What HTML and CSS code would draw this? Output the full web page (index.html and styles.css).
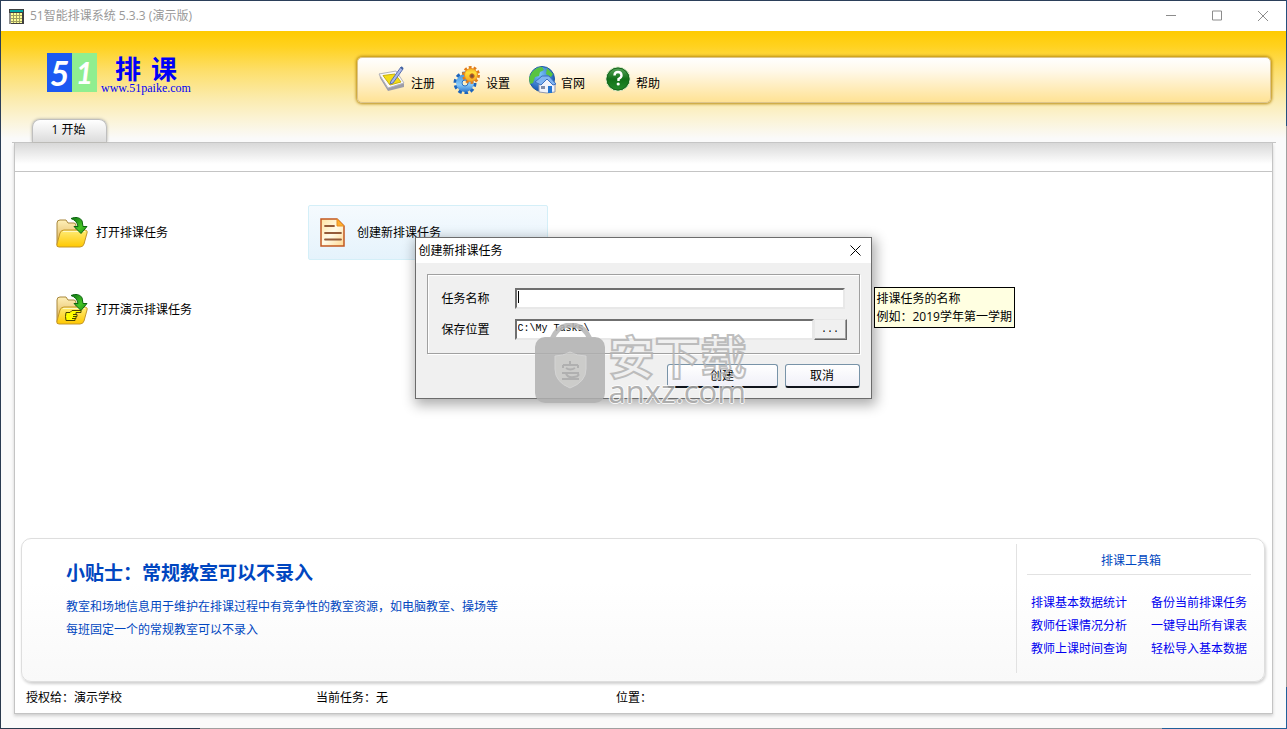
FILE: index.html
```html
<!DOCTYPE html>
<html lang="zh-CN">
<head>
<meta charset="utf-8">
<meta name="viewport" content="width=device-width, initial-scale=1">
<title>51智能排课系统</title>
<link rel="stylesheet" href="styles.css">
</head>
<body>
<svg class="defs" aria-hidden="true">
  <defs>
    <linearGradient id="folder-back" x1="0" y1="0" x2="0" y2="1"><stop offset="0" stop-color="#fff0b8"/><stop offset="1" stop-color="#dcae50"/></linearGradient>
    <linearGradient id="folder-front" x1="0" y1="0" x2="0" y2="1"><stop offset="0" stop-color="#ffec78"/><stop offset="1" stop-color="#ffc800"/></linearGradient>
    <linearGradient id="arrow" x1="0" y1="0" x2="1" y2="1"><stop offset="0" stop-color="#0a7012"/><stop offset=".6" stop-color="#45c425"/><stop offset="1" stop-color="#1a8a12"/></linearGradient>
    <linearGradient id="paper" x1="0" y1="0" x2="1" y2="1"><stop offset="0" stop-color="#ffe3a0"/><stop offset=".5" stop-color="#fffbe8"/><stop offset="1" stop-color="#ffd890"/></linearGradient>
    <linearGradient id="gear-blue" gradientUnits="userSpaceOnUse" x1="0" y1="5" x2="0" y2="28"><stop offset="0" stop-color="#2f86dc"/><stop offset=".6" stop-color="#86c8f8"/><stop offset="1" stop-color="#1460c0"/></linearGradient>
    <linearGradient id="gear-gold" gradientUnits="userSpaceOnUse" x1="0" y1="0" x2="0" y2="19"><stop offset="0" stop-color="#f0941c"/><stop offset=".35" stop-color="#ffe03a"/><stop offset="1" stop-color="#f08c18"/></linearGradient>
    <radialGradient id="globe" cx=".4" cy=".3" r=".7"><stop offset="0" stop-color="#7cc8fa"/><stop offset="1" stop-color="#1250b0"/></radialGradient>
    <linearGradient id="help" x1="0" y1="0" x2="0" y2="1"><stop offset="0" stop-color="#5faa62"/><stop offset=".5" stop-color="#107018"/><stop offset="1" stop-color="#248c2c"/></linearGradient>
    <g id="folder">
      <path d="M2 29V7q0-3 3-3h6l2 3h6q2 0 2 3v8z" fill="url(#folder-back)" stroke="#a8873c"/>
      <path d="M9 14h20q4 0 3 3l-3 11q-1 3-4 3H4q-3 0-2-3l3-11q1-3 4-3z" fill="url(#folder-front)" stroke="#c4962a"/>
      <path d="M8 15.500h22" stroke="#fff8c0"/>
      <path d="M16 2.500q7-3 11 2l1 6h4l-6 7-7-7h4q-1-6-7-8z" fill="url(#arrow)" stroke="#0d6710"/>
    </g>
  </defs>
</svg>
<div class="window">
  <header class="titlebar">
    <svg class="app-icon" viewBox="0 0 15 15" aria-hidden="true"><path d="M0 0h15v15H0z" fill="#404040"/><path d="M0 4h2v11H0z" fill="#909090"/><path d="M1 1h13v2H1z" fill="#00a8a8"/><path d="M2 4h11v10H2z" fill="#ffff98"/><path d="M2 6.500h11M2 9.500h11M2 12.500h11M4.500 4v10M7.500 4v10M10.500 4v10" stroke="#a0a060"/></svg>
    <h1 class="app-title">51智能排课系统 5.3.3 (演示版)</h1>
    <div class="window-controls">
      <button class="control" type="button" aria-label="最小化"><svg viewBox="0 0 10 10"><path d="M0 4.500h10"/></svg></button>
      <button class="control" type="button" aria-label="最大化"><svg viewBox="0 0 10 10"><path d="M.5 0h9v9h-9z"/></svg></button>
      <button class="control" type="button" aria-label="关闭"><svg viewBox="0 0 10 10"><path d="M0 0l10 10M10 0L0 10"/></svg></button>
    </div>
  </header>
  <div class="banner">
    <div class="brand-row">
      <div class="logo">
        <span class="logo-five">5</span><span class="logo-one">1</span>
        <div class="logo-words"><div class="logo-name"><span>排</span><span>课</span></div><span class="logo-site">www.51paike.com</span></div>
      </div>
      <nav class="toolbar">
        <button class="tool" type="button">
          <svg viewBox="0 0 28 28" aria-hidden="true"><path d="M1 7l9 14 16-4v4l-16 4L2 12z" fill="#9c9ca8"/><path d="M1 8l17-3 8 12-16 5z" fill="#fafafc" stroke="#b4b4bc"/><path d="M5 9.500L17 8l6 8-11 3z" fill="#f4dc18" stroke="#c8b010"/><path d="M13 15l-1 3 3-1L25 3l-2-2z" fill="#a8b8ea" stroke="#5a6eb0"/><path d="M23 1l2 2" stroke="#4060a0" stroke-width="2"/></svg>
          <span>注册</span></button>
        <button class="tool" type="button">
          <svg viewBox="0 0 28 28" aria-hidden="true"><circle cx="12" cy="17" r="9.500" fill="none" stroke="#1c64bc" stroke-width="4" stroke-dasharray="3.400 2.570"/><circle cx="12" cy="17" r="6" fill="none" stroke="url(#gear-blue)" stroke-width="6"/><circle cx="12" cy="17" r="3" fill="#ffefc4" stroke="#2472c8"/><circle cx="18" cy="9" r="7.500" fill="none" stroke="#e07c1c" stroke-width="3" stroke-dasharray="2.700 2.012"/><circle cx="18" cy="9" r="6.500" fill="url(#gear-gold)" stroke="#ec9020"/><circle cx="19" cy="10" r="2.200" fill="#7b5038" stroke="#d06818"/></svg>
          <span>设置</span></button>
        <button class="tool" type="button">
          <svg viewBox="0 0 28 28" aria-hidden="true"><circle cx="14" cy="13" r="12.500" fill="url(#globe)" stroke="#1c58a0"/><path d="M4 6q5-5 10-5l2 3-4 2-1 4-4 1-2 6-3 1-1-6zM19 2l6 6-2 3-5-3z" fill="#58c440"/><path d="M11 26V18l6-6 10 6v8l-8 1z" fill="#f2f4fa" stroke="#9098b0"/><path d="M7 16l7-6h7l7 8-3 1-6-6-6 6z" fill="#80b4f0" stroke="#3c70c0"/><path d="M20 20h4v7h-4z" fill="#2475d0"/><path d="M13 20h4v3h-4z" fill="#808ca8"/></svg>
          <span>官网</span></button>
        <button class="tool" type="button">
          <svg viewBox="0 0 28 28" aria-hidden="true"><circle cx="15" cy="13" r="12" fill="url(#help)" stroke="#d8e8c8"/><circle cx="15" cy="13" r="11" fill="none" stroke="#17651c"/><path d="M11.500 9.500Q11.500 6 15 6t3.500 3.500q0 2-3 3.500V15" fill="none" stroke="#fff" stroke-width="2.400"/><circle cx="15.200" cy="18" r="1.600" fill="#fff"/></svg>
          <span>帮助</span></button>
      </nav>
    </div>
    <div class="tabs"><button class="tab" type="button">1 开始</button></div>
  </div>
  <main class="page">
    <div class="ribbon"></div>
    <section class="tasks">
      <button class="task" type="button"><svg viewBox="0 0 33 33" aria-hidden="true"><use href="#folder"/></svg><span>打开排课任务</span></button>
      <button class="task task-active" type="button"><svg viewBox="0 0 33 33" aria-hidden="true"><path d="M5 3h16l7 7v20H5z" fill="url(#paper)" stroke="#c25820" stroke-width="1.500"/><path d="M21 3l7 7h-7z" fill="#ffb030" stroke="#e89020"/><path d="M9 10h9M9 17h16M9 23.500h16" stroke="#935b38" stroke-width="1.800" stroke-linecap="round"/></svg><span>创建新排课任务</span></button>
      <button class="task" type="button"><svg viewBox="0 0 33 33" aria-hidden="true"><use href="#folder"/><path d="M11 19.500h4l2-2h9v2h-5v2h1v2h-1v2h-1v2h-9q-1-4 0-8z" fill="#ffff00" stroke="#4a4400"/><path d="M18 21.500h3M18 23.500h3M17 25.500h3" stroke="#4a4400"/></svg><span>打开演示排课任务</span></button>
    </section>
    <section class="info-card">
      <article class="tip">
        <h2 class="tip-title">小贴士：常规教室可以不录入</h2>
        <p class="tip-text">教室和场地信息用于维护在排课过程中有竞争性的教室资源，如电脑教室、操场等<br>每班固定一个的常规教室可以不录入</p>
      </article>
      <aside class="toolbox">
        <h2 class="toolbox-title">排课工具箱</h2>
        <div class="toolbox-links">
          <a href="#">排课基本数据统计</a><a href="#">备份当前排课任务</a>
          <a href="#">教师任课情况分析</a><a href="#">一键导出所有课表</a>
          <a href="#">教师上课时间查询</a><a href="#">轻松导入基本数据</a>
        </div>
      </aside>
    </section>
    <footer class="status"><span>授权给：演示学校</span><span>当前任务：无</span><span>位置：</span></footer>
  </main>
</div>
<form class="dialog" role="dialog" aria-labelledby="dialog-title">
  <div class="dialog-bar">
    <h2 class="dialog-title" id="dialog-title">创建新排课任务</h2>
    <button class="dialog-close" type="button" aria-label="关闭"><svg viewBox="0 0 11 11"><path d="M.5.5l10 10M10.500.5l-10 10"/></svg></button>
  </div>
  <div class="fields">
    <label for="task-name">任务名称</label>
    <div class="name-row"><input class="field field-current" id="task-name" type="text"></div>
    <label for="task-path">保存位置</label>
    <div class="path-row"><input class="field" id="task-path" type="text" value="C:\My Tasks\"><button class="browse" type="button">...</button></div>
  </div>
  <div class="actions">
    <button class="action action-main" type="button">创建</button>
    <button class="action" type="button">取消</button>
  </div>
  <div class="tooltip" role="tooltip">排课任务的名称<br>例如：2019学年第一学期</div>
  <div class="watermark">
    <svg class="mark" viewBox="0 0 70 82" aria-hidden="true"><path d="M17 16q6-14 19-14t19 14" fill="none" stroke="#b5b5b5" stroke-width="5"/><rect y="14" width="70" height="66" rx="10" fill="#b1b1b1"/><path d="M20 33q8 0 15-4 7 4 16 4v13q0 13-16 19-15-6-15-19z" fill="#c6c6c4" stroke="#d0d0d0"/><path d="M35 38v3M28 42h15M28 42v3M43 42v3M31 45q4 3 9 0M27 50h17M31 50q1 5 8 4t3-4M27 56h17" fill="none" stroke="#a5a5a5" stroke-width="2"/></svg>
    <div class="mark-words"><span class="mark-name">安下载</span><span class="mark-site">anxz.com</span></div>
  </div>
</form>
</body>
</html>
```
FILE: styles.css
```css
* { box-sizing: border-box; }
html, body { margin: 0; height: 100%; }
body {
  font-family: "Open Sans", "Noto Sans CJK SC", sans-serif;
  font-size: 12px;
  line-height: 18px;
  color: #000;
  position: relative;
}
h1, h2, p { margin: 0; font-size: 12px; font-weight: 400; }
button { font: inherit; color: inherit; padding: 0; margin: 0; border: 0; background: none; white-space: nowrap; }
input { font: inherit; }
.defs { position: absolute; width: 0; height: 0; }

.window {
  min-height: 100%;
  display: flex;
  flex-direction: column;
  border: 1px solid transparent;
  background:
    linear-gradient(#fafafa, #fafafa) padding-box,
    linear-gradient(#24507e 126px, #a0a0a0 126px calc(100% - 42px), #20609a 0) right / 1px 100% no-repeat border-box,
    linear-gradient(90deg, #2b3a4e 200px, #a0a0a0 200px calc(100% - 125px), #20609a 0) bottom / 100% 1px no-repeat border-box,
    linear-gradient(#2b3f5a, #2b3a4e) border-box;
}
.titlebar { height: 30px; display: flex; align-items: center; background: #fff; padding-left: 8px; gap: 6px; }
.app-icon { width: 15px; height: 15px; }
.app-title { flex: 1; color: #999; }
.window-controls { display: flex; }
.control { width: 46px; height: 30px; display: grid; place-items: center; }
.control svg { width: 10px; height: 10px; overflow: visible; }
.control path { fill: none; stroke: #8c8c8c; }

.banner {
  display: flex;
  flex-direction: column;
  background: linear-gradient(#ffcb00, #ffd220 14%, #fddf6c 36%, #fbebac 60%, #fbf3d4 78%, #fafafa 96%);
}
.brand-row { display: flex; padding: 22px 15px 0 46px; height: 88px; }
.logo { width: 310px; height: 39px; display: flex; flex: none; }
.logo-five, .logo-one {
  width: 25px; height: 39px; color: #fff; text-align: center;
  font: italic 700 34px/39px Lato, sans-serif;
}
.logo-five { background: #1c59f2; }
.logo-one { background: #90ee90; font-size: 30px; }
.logo-words { display: flex; flex-direction: column; color: #0000f8; padding-left: 4px; white-space: nowrap; }
.logo-name { display: flex; gap: 10px; font: 700 26px/30px "Noto Sans CJK SC", sans-serif; padding-left: 14px; }
.logo-site { font: 12px/10px "Liberation Serif", serif; }
.toolbar {
  flex: 1;
  height: 46px;
  margin-top: 4px;
  padding-left: 20px;
  display: flex;
  align-items: center;
  border: 1px solid #dcc48c;
  border-radius: 5px;
  background: linear-gradient(#fff, #fff8e8 30%, #ffe294);
  box-shadow: 0 0 3px 1px #b98b10;
}
.tool { width: 75px; display: flex; align-items: center; gap: 5px; }
.tool svg { width: 28px; height: 28px; }
.tool span { padding-top: 8px; }
.tabs { margin: 0 10px 0 11px; padding-left: 20px; height: 24px; border-bottom: 1px solid #c4c4c4; }
.tab {
  width: 75px; height: 23px; padding: 0 2px 2px 0;
  border: 1px solid #bfbfbf; border-bottom: 0; border-radius: 8px 8px 0 0;
  background: linear-gradient(#fff, #dcdcdc);
  box-shadow: 0 0 3px #aaa89c;
}

.page {
  flex: 1;
  display: flex;
  flex-direction: column;
  margin: 0 13px 14px;
  border: 1px solid #c4c4c4;
  border-top: 0;
  background: #fff;
  box-shadow: 0 2px 3px #d0d0d0;
}
.ribbon { height: 29px; border-bottom: 1px solid #c4c4c4; background: linear-gradient(#d8d8d8, #fff 75%); }
.tasks {
  flex: 1;
  display: grid;
  grid-template-columns: 240px 240px;
  grid-auto-rows: 55px;
  gap: 22px 21px;
  padding: 33px 32px;
}
.task { display: flex; align-items: center; gap: 8px; padding-left: 7px; border: 1px solid transparent; border-radius: 2px; }
.task svg { width: 33px; height: 33px; }
.task-active { border-color: #d4eff8; background: linear-gradient(#f5fafe, #e5f3fc); }
.info-card {
  margin: 0 7px 0 6px;
  min-height: 144px;
  display: flex;
  border: 1px solid #dedede;
  border-radius: 10px;
  background: linear-gradient(#fff 30%, #f9f9f9);
  box-shadow: 1px 2px 3px #d0d0d0;
}
.tip { flex: 1; padding: 22px 44px; color: #0046c0; }
.tip-title { font-size: 19px; line-height: 24px; font-weight: 700; }
.tip-text { padding-top: 10px; line-height: 23px; }
.toolbox { width: 248px; margin: 5px 0 8px; padding: 0 13px 0 10px; border-left: 1px solid #e2e2e2; }
.toolbox-title { padding: 8px 16px 4px 0; text-align: center; color: #0046c0; border-bottom: 1px solid #e2e2e2; }
.toolbox-links { display: grid; grid-template-columns: 120px 1fr; padding: 16px 0 0 4px; line-height: 23px; white-space: nowrap; }
.toolbox-links a { color: #0000f0; text-decoration: none; }
.status { height: 31px; display: grid; grid-template-columns: 290px 300px 1fr; align-items: center; padding-left: 11px; }

.dialog {
  position: absolute;
  top: 237px;
  left: calc(50% - 229px);
  width: 457px;
  border: 1px solid #6c6c6c;
  background: #f0f0f0;
  box-shadow: 2px 4px 12px 2px rgba(0, 0, 0, .32);
}
.dialog-bar { height: 25px; display: flex; align-items: center; justify-content: space-between; padding: 0 10px 0 3px; background: #fff; }
.dialog-close { display: flex; }
.dialog-close svg { width: 11px; height: 11px; }
.dialog-close path { stroke: #000; fill: none; }
.fields {
  margin: 11px 11px 10px;
  height: 80px;
  padding: 12px 12px 12px 14px;
  display: grid;
  grid-template-columns: 73px 1fr;
  row-gap: 8px;
  align-items: center;
  border: 1px solid #a0a0a0;
  box-shadow: 1px 1px #fff, inset 1px 1px #fff;
}
.field {
  width: 100%; min-width: 0; height: 21px; padding: 0 1px 2px;
  border: 2px solid; border-color: #6f6f6f #e8e8e8 #e8e8e8 #6f6f6f;
  border-radius: 0; outline: 0; background: #fff;
  font: 10px/16px "Liberation Mono", monospace;
}
.field-current { background: linear-gradient(#000, #000) 1px 1px / 1px 12px no-repeat #fff; }
.name-row { display: flex; padding-right: 2px; }
.path-row { display: flex; }
.browse {
  flex: none; width: 33px; height: 21px;
  border: 1px solid; border-color: #e8e8e8 #696969 #696969 #e8e8e8;
  box-shadow: inset -1px -1px #a0a0a0;
  font: 10px/18px "Liberation Mono", monospace;
}
.actions { display: flex; justify-content: flex-end; gap: 7px; padding: 0 11px 10px; }
.action {
  width: 75px; height: 24px; padding-top: 1px;
  border: 1px solid #7893a8; border-bottom: 2px solid #10141c; border-radius: 3px;
  background: linear-gradient(#fff, #f0f0f8);
}
.action-main { width: 111px; }
.tooltip {
  position: absolute; left: 458px; top: 49px;
  padding: 2px 2px 1px;
  border: 1px solid #000; background: #ffffe1; white-space: nowrap;
}
.watermark { position: absolute; left: 119px; top: 85px; display: flex; align-items: flex-end; gap: 4px; pointer-events: none; opacity: .85; }
.mark { width: 70px; height: 82px; }
.mark-words { display: flex; flex-direction: column; white-space: nowrap; }
.mark-name { font: 700 46px/46px "Noto Sans CJK SC", sans-serif; color: transparent; -webkit-text-stroke: 2px #b4b4b4; }
.mark-site { font: 31px/28px "Open Sans", sans-serif; color: #a8a8a8; text-shadow: 1px 0 #fff, -1px 0 #fff, 0 1px #fff, 0 -1px #fff; }
```
